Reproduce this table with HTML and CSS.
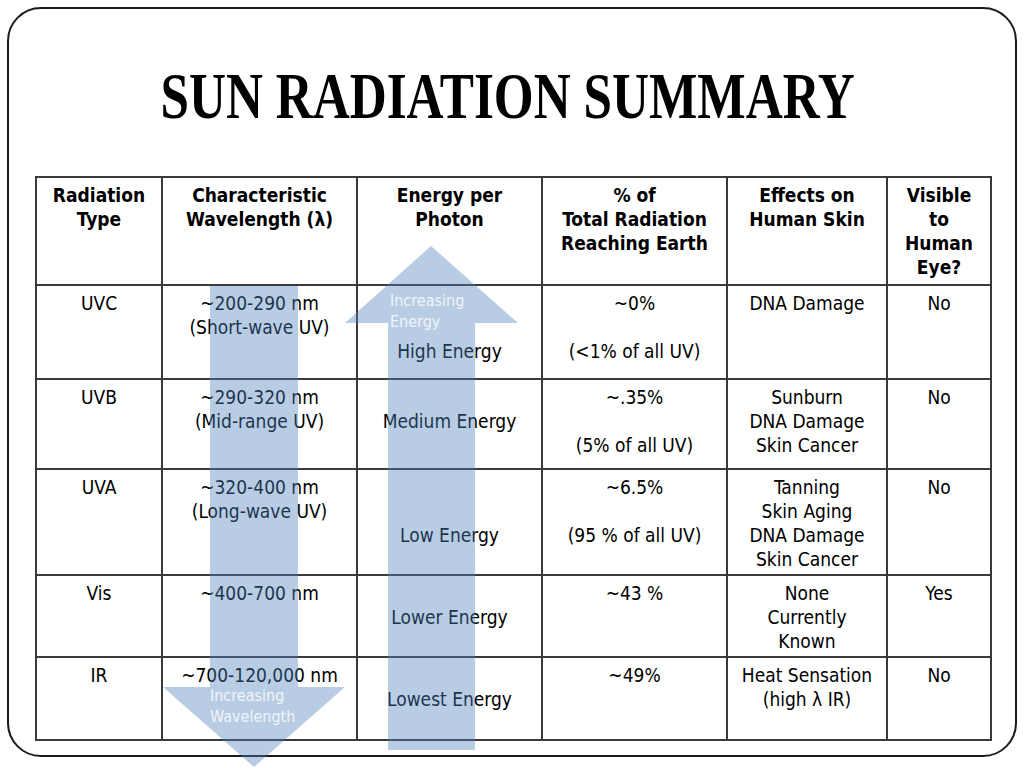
FILE: index.html
```html
<!DOCTYPE html>
<html>
<head>
<meta charset="utf-8">
<link rel="stylesheet" href="styles.css">
</head>
<body>
<div class="slide">
  <h1 class="title"><span>SUN RADIATION SUMMARY</span></h1>
  <table class="summary">
    <colgroup>
      <col class="c1"><col class="c2"><col class="c3"><col class="c4"><col class="c5"><col class="c6">
    </colgroup>
    <tr class="r-head">
      <th>Radiation<br>Type</th>
      <th>Characteristic<br>Wavelength (λ)</th>
      <th>Energy per<br>Photon</th>
      <th>% of<br>Total Radiation<br>Reaching Earth</th>
      <th>Effects on<br>Human Skin</th>
      <th>Visible<br>to<br>Human<br>Eye?</th>
    </tr>
    <tr class="r-uvc">
      <td>UVC</td>
      <td>~200-290 nm<br>(Short-wave UV)</td>
      <td><br><br>High Energy</td>
      <td>~0%<br><br>(&lt;1% of all UV)</td>
      <td>DNA Damage</td>
      <td>No</td>
    </tr>
    <tr class="r-uvb">
      <td>UVB</td>
      <td>~290-320 nm<br>(Mid-range UV)</td>
      <td><br>Medium Energy</td>
      <td>~.35%<br><br>(5% of all UV)</td>
      <td>Sunburn<br>DNA Damage<br>Skin Cancer</td>
      <td>No</td>
    </tr>
    <tr class="r-uva">
      <td>UVA</td>
      <td>~320-400 nm<br>(Long-wave UV)</td>
      <td><br><br>Low Energy</td>
      <td>~6.5%<br><br>(95 % of all UV)</td>
      <td>Tanning<br>Skin Aging<br>DNA Damage<br>Skin Cancer</td>
      <td>No</td>
    </tr>
    <tr class="r-vis">
      <td>Vis</td>
      <td>~400-700 nm</td>
      <td><br>Lower Energy</td>
      <td>~43 %</td>
      <td>None<br>Currently<br>Known</td>
      <td>Yes</td>
    </tr>
    <tr class="r-ir">
      <td>IR</td>
      <td>~700-120,000 nm</td>
      <td><br>Lowest Energy</td>
      <td>~49%</td>
      <td>Heat Sensation<br>(high λ IR)</td>
      <td>No</td>
    </tr>
  </table>
</div>
<svg class="arrows" width="1024" height="768" viewBox="0 0 1024 768">
  <polygon points="210,286 298,286 298,687 345,687 254,767 163,687 210,687"/>
  <polygon points="431,246 518,323 475,323 475,750 388,750 388,323 345,323"/>
</svg>
<div class="label label-energy">Increasing<br>Energy</div>
<div class="label label-wave">Increasing<br>Wavelength</div>
</body>
</html>
```
FILE: styles.css
```css
html, body {
  margin: 0;
  padding: 0;
  background: #ffffff;
}
body {
  position: relative;
  width: 1024px;
  height: 768px;
  overflow: hidden;
  font-family: "DejaVu Sans Condensed", "DejaVu Sans", Verdana, sans-serif;
  color: #000;
}
.slide {
  box-sizing: border-box;
  margin: 7px 0 0 7px;
  width: 1010px;
  height: 750px;
  border: 2px solid #1a1a1a;
  border-radius: 34px;
  padding: 0 25px 0 26px;
}
.title {
  margin: 0;
  padding-top: 51px;
  font-family: "Liberation Serif", "Times New Roman", serif;
  font-weight: 700;
  font-size: 65px;
  line-height: 72px;
  text-align: center;
  white-space: nowrap;
}
.title span {
  display: inline-block;
  transform: scaleX(0.788);
  margin-right: 10px;
}
.summary {
  margin-top: 44px;
  width: 955px;
  border-collapse: collapse;
  table-layout: fixed;
  border: 2px solid #3a3a3a;
  font-size: 19px;
  line-height: 24px;
}
.c1 { width: 126px; }
.c2 { width: 195px; }
.c3 { width: 185px; }
.c4 { width: 185px; }
.c5 { width: 160px; }
.c6 { width: 104px; }
.summary th,
.summary td {
  border: 2px solid #3a3a3a;
  padding: 5px 2px 0;
  text-align: center;
  vertical-align: top;
  white-space: nowrap;
}
.summary th { font-weight: 700; }
.summary td { font-weight: 400; }
.r-head { height: 108px; }
.r-uvc { height: 94px; }
.r-uvb { height: 90px; }
.r-uva { height: 106px; }
.r-vis { height: 82px; }
.r-ir { height: 83px; }
.arrows {
  position: absolute;
  left: 0;
  top: 0;
  fill: #4f81bd;
  opacity: 0.4;
  pointer-events: none;
}
.label {
  position: absolute;
  font-family: "DejaVu Sans Condensed", "DejaVu Sans", Verdana, sans-serif;
  font-size: 16px;
  line-height: 21px;
  color: #f0f4fa;
}
.label-energy { left: 390px; top: 290px; }
.label-wave { left: 210px; top: 685px; }
```
